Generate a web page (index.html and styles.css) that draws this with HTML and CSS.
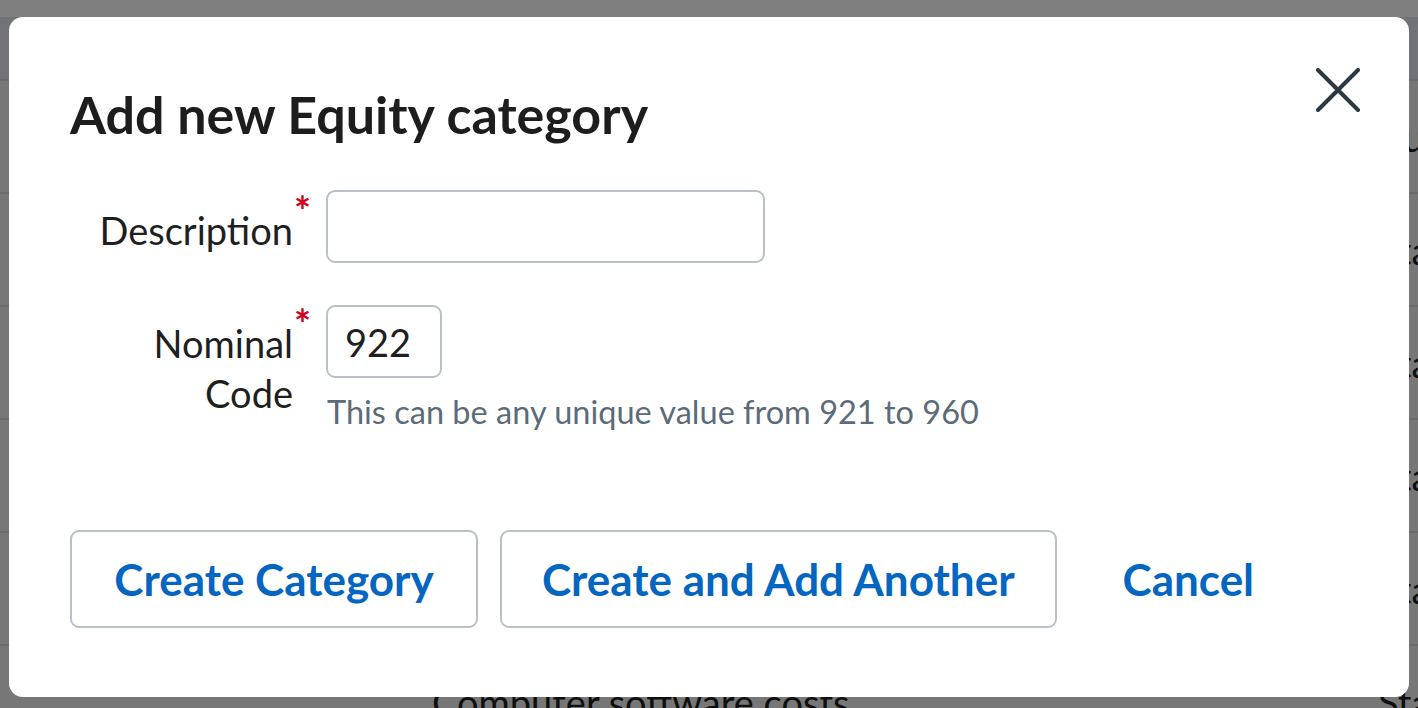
FILE: index.html
```html
<!DOCTYPE html>
<html lang="en">
<head>
<meta charset="utf-8">
<title>Add new Equity category</title>
<link rel="stylesheet" href="styles.css">
</head>
<body>
<div class="page">
  <div class="topband"></div>
  <div class="table">
    <div class="thead"></div>
    <div class="row"><span class="cell"></span><span class="cell"></span><span class="cell">Current</span></div>
    <div class="row"><span class="cell"></span><span class="cell"></span><span class="cell">Standard</span></div>
    <div class="row"><span class="cell"></span><span class="cell"></span><span class="cell">Standard</span></div>
    <div class="row"><span class="cell"></span><span class="cell"></span><span class="cell">Standard</span></div>
    <div class="row"><span class="cell"></span><span class="cell"></span><span class="cell">Standard</span></div>
    <div class="row"><span class="cell"></span><span class="cell">Computer software costs</span><span class="cell">Standard</span></div>
  </div>
</div>

<div class="overlay">
  <div class="modal" role="dialog" aria-labelledby="dlg-title">
    <button class="close" type="button" aria-label="Close">
      <svg width="44" height="44" viewBox="0 0 44 44" aria-hidden="true">
        <path d="M2 2 L42 42 M42 2 L2 42" fill="none" stroke="#2b3842" stroke-width="4" stroke-linecap="round"/>
      </svg>
    </button>
    <h1 class="title" id="dlg-title">Add new Equity category</h1>
    <form class="form">
      <label class="label" for="desc"><span class="label-text">Description</span><span class="req">*</span></label>
      <div class="field">
        <input class="input input-wide" id="desc" type="text">
      </div>
      <label class="label label-code" for="code"><span class="label-text">Nominal<br>Code</span><span class="req">*</span></label>
      <div class="field">
        <input class="input input-code" id="code" type="text" value="922">
        <p class="help">This can be any unique value from 921 to 960</p>
      </div>
    </form>
    <div class="actions">
      <button class="btn btn-primary" type="button">Create Category</button>
      <button class="btn" type="button">Create and Add Another</button>
      <button class="btn btn-link" type="button">Cancel</button>
    </div>
  </div>
</div>
</body>
</html>
```

FILE: styles.css
```css
* { box-sizing: border-box; }

html, body {
  margin: 0;
  padding: 0;
  width: 1418px;
  height: 708px;
  overflow: hidden;
}

body {
  font-family: "Lato", "Liberation Sans", sans-serif;
  background: #ffffff;
  color: #222222;
}

/* ---------- page behind the dialog ---------- */
.page {
  width: 1418px;
  height: 708px;
  overflow: hidden;
}

.topband {
  height: 17px;
  background: #ffffff;
}

.thead {
  height: 62px;
  background: #dfe4ec;
}

.row {
  display: grid;
  grid-template-columns: 432px 946px 1fr;
  align-items: center;
  height: 113px;
  border-top: 2px solid #d6d6d6;
  background: #efefef;
  font-size: 38px;
  color: #1e1e1e;
  white-space: nowrap;
}

.cell { overflow: visible; }

/* ---------- overlay + dialog ---------- */
.overlay {
  position: fixed;
  inset: 0;
  background: rgba(0, 0, 0, 0.5);
  display: flex;
  align-items: flex-start;
  padding: 17px 9px 0 9px;
}

.modal {
  position: relative;
  width: 1400px;
  height: 680px;
  background: #ffffff;
  border-radius: 14px;
  padding: 66px 61px 0 61px;
}

.close {
  position: absolute;
  top: 51px;
  right: 49px;
  width: 44px;
  height: 44px;
  padding: 0;
  margin: 0;
  border: 0;
  background: transparent;
  cursor: pointer;
  display: block;
}
.close svg { display: block; }

.title {
  margin: 0;
  font-size: 52px;
  line-height: 62px;
  font-weight: 700;
  color: #1d1d1d;
  letter-spacing: 0;
}

.form {
  display: grid;
  grid-template-columns: 239px 1fr;
  column-gap: 17px;
  row-gap: 42px;
  margin: 45px 0 0 0;
}

.label {
  display: flex;
  justify-content: flex-end;
  align-items: flex-start;
  padding-top: 15px;
  font-size: 38px;
  line-height: 50px;
  color: #1f1f1f;
}
.label-code { padding-top: 13px; }

.label-text { text-align: right; }

.req {
  color: #d0021b;
  font-weight: 700;
  font-size: 40px;
  line-height: 40px;
  margin-top: -14px;
  margin-left: 1px;
  width: 15px;
}

.field {
  display: flex;
  flex-direction: column;
  align-items: flex-start;
}

.input {
  height: 73px;
  border: 2px solid #b9c0c7;
  border-radius: 9px;
  background: #ffffff;
  font-family: "Lato", "Liberation Sans", sans-serif;
  font-size: 38px;
  color: #1f1f1f;
  padding: 0 17px;
  margin: 0;
  outline: none;
}
.input-wide { width: 439px; }
.input-code { width: 116px; }

.help {
  margin: 14px 0 0 1px;
  font-size: 32.5px;
  line-height: 40px;
  color: #5c6b79;
  white-space: nowrap;
}

.actions {
  display: flex;
  gap: 22px;
  margin-top: 98px;
}

.btn {
  height: 98px;
  padding: 0 40px;
  border: 2px solid #b9c0c7;
  border-radius: 9px;
  background: #ffffff;
  font-family: "Lato", "Liberation Sans", sans-serif;
  font-size: 44px;
  font-weight: 700;
  color: #0466c0;
  cursor: pointer;
  white-space: nowrap;
}

.btn-primary { min-width: 408px; }

.btn-link {
  border-color: transparent;
  padding: 0 42px;
}
```
